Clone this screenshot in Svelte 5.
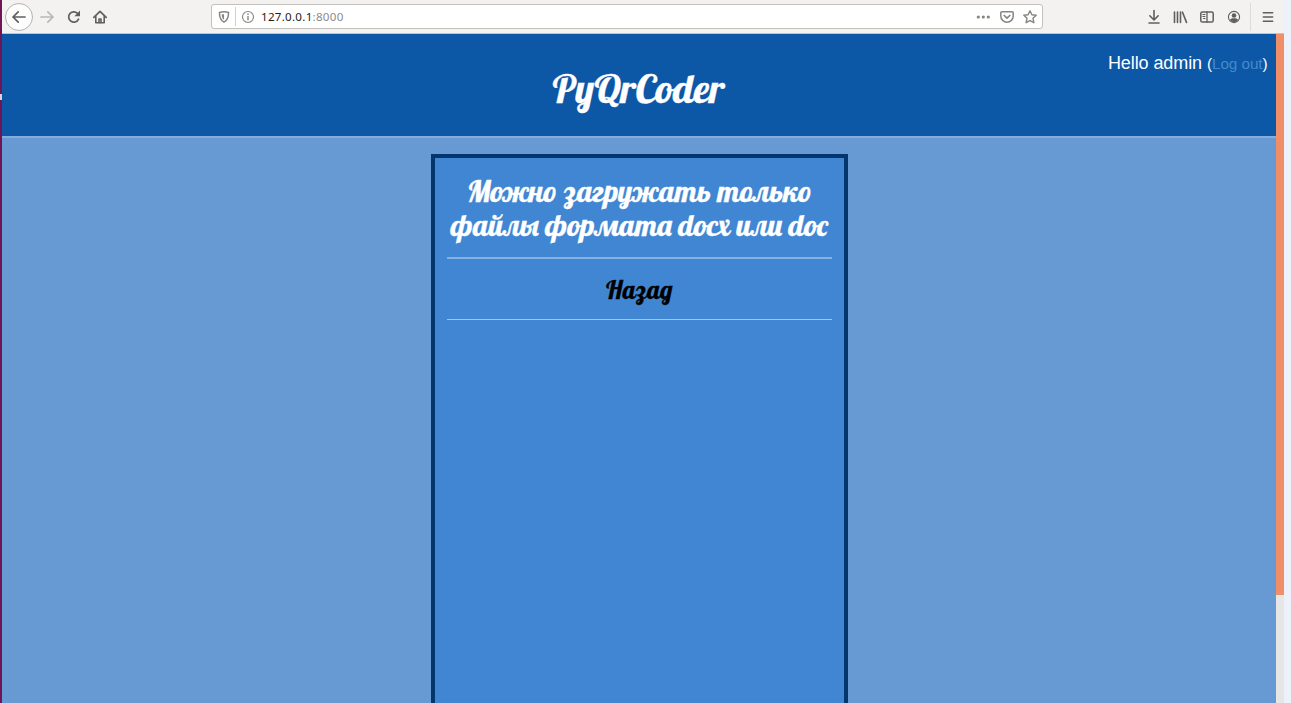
<script>
  const message = 'Можно загружать только файлы формата docx или doc';
</script>

<div class="screen">
  <div class="edge"><i></i></div>
  <div class="browser">
    <div class="toolbar">
      <span class="back">
        <svg width="16" height="16" viewBox="0 0 16 16" class="ic"><path d="M14 8H2M7.200 2.800 2 8l5.200 5.200" /></svg>
      </span>
      <svg width="16" height="16" viewBox="0 0 16 16" class="ic fwd"><path d="M2 8h12M8.800 2.800 14 8l-5.200 5.200" /></svg>
      <svg width="16" height="16" viewBox="0 0 16 16" class="ic reload"><path d="M12.6 10.2A5.2 5.2 0 1 1 12 4.8" /><path d="M14 1.6v5.6H8.4z" class="fill" /></svg>
      <svg width="16" height="16" viewBox="0 0 16 16" class="ic home"><path d="M1.8 8.3 8 2.300l6.200 6" /><path d="M3.8 7.5v6.300h8.400V7.5M7 14v-4h2v4" stroke-width="1.6" /></svg>

      <div class="url">
        <svg width="14" height="14" viewBox="0 0 16 16" class="ic lite shield"><path d="M8 2c2 0 3.700.3 5.200.8 0 5.200-.9 8.900-5.200 11.100C3.700 11.700 2.800 8 2.800 2.800 4.300 2.300 6 2 8 2z" /><path d="M8 4.800c-.9 0-1.800.1-2.600.3.1 3.200.9 5 2.600 6.100z" class="fill" /></svg>
        <span class="sep"></span>
        <svg width="14" height="14" viewBox="0 0 14 14" class="ic lite info"><circle cx="7" cy="7" r="5.500" stroke-width="1.100" /><path d="M7 6v4.200M7 3.600v1.400" stroke-width="1.400" stroke-linecap="butt" /></svg>
        <span class="addr">127.0.0.1<em>:8000</em></span>
        <svg width="16" height="16" viewBox="0 0 16 16" class="ic lite dots"><g class="fill"><circle cx="3.300" cy="8" r="1.600" /><circle cx="8.300" cy="8" r="1.600" /><circle cx="13.300" cy="8" r="1.600" /></g></svg>
        <svg width="16" height="16" viewBox="0 0 16 16" class="ic lite pocket"><path d="M2.800 2.700h10.400q1 0 1 1V7a6.200 6.200 0 0 1-12.400 0V3.700q0-1 1-1z" stroke-width="1.500" /><path d="m5.200 6.500 2.800 2.600 2.800-2.600" stroke-width="1.700" /></svg>
        <svg width="16" height="16" viewBox="0 0 16 16" class="ic lite star"><path d="m8 1.800 1.900 4 4.300.5-3.200 3 .9 4.400L8 11.600l-3.900 2.100.9-4.400-3.200-3 4.300-.5z" stroke-width="1.400" /></svg>
      </div>

      <svg width="16" height="16" viewBox="0 0 16 16" class="ic dl"><path d="M8 1.500v9M3.800 6.800 8 11l4.200-4.200M3 14h10" stroke-width="1.600" /></svg>
      <svg width="16" height="16" viewBox="0 0 16 16" class="ic lib"><path d="M2.500 3v10.500M5.500 3v10.500M8.500 3v10.500M10.500 3.200l4 10.200" stroke-width="1.600" /></svg>
      <svg width="16" height="16" viewBox="0 0 16 16" class="ic side"><rect x="1.800" y="3" width="12.400" height="10" rx="1.600" stroke-width="1.500" /><path d="M8 3v10" stroke-width="1.300" /><path d="M3.800 5.500H6M3.800 7.500H6M4.500 9.500H6" stroke-width="1" /></svg>
      <svg width="16" height="16" viewBox="0 0 16 16" class="ic user"><circle cx="8" cy="8" r="5.600" stroke-width="1.100" /><circle cx="8" cy="6.500" r="2.300" class="fill" /><path d="M3.900 11c1.200-1.800 2.600-1.700 4.100-1.700s2.900-.1 4.100 1.700A5 5 0 0 1 3.900 11z" class="fill" /></svg>
      <span class="bar"></span>
      <svg width="16" height="16" viewBox="0 0 16 16" class="ic menu"><path d="M3.300 3.700h9.400M3.300 8h9.400M3.300 12.300h9.400" stroke-width="1.500" /></svg>
    </div>

    <div class="viewport">
      <div class="page">
        <header>
          <h1>PyQrCoder</h1>
          <p class="hello">Hello admin <small>(<a href="#logout">Log out</a>)</small></p>
        </header>
        <main>
          <section>
            <h2>{message}</h2>
            <hr class="first" />
            <h3>Назад</h3>
            <hr />
          </section>
        </main>
      </div>
      <div class="scroll"><div class="thumb"></div></div>
    </div>
  </div>
  <div class="desk"></div>
</div>

<style>
  :global(body) { margin: 0; overflow: hidden; }
  .screen { display: flex; width: 1291px; height: 703px; overflow: hidden; font-family: "Liberation Sans", Arial, sans-serif; }
  .edge { width: 2px; background: #6f1458; padding-top: 94px; box-sizing: border-box; }
  .edge i { display: block; height: 6px; background: #d8d4d6; }
  .desk { width: 7px; background: #ecf1fa; }
  .browser { width: 1282px; display: flex; flex-direction: column; }
  .toolbar { height: 34px; box-sizing: border-box; background: #f3f2f0; border-bottom: 1px solid #c5c3c0; display: flex; align-items: center; flex: none; }
  .ic { fill: none; stroke: #5f5f5c; stroke-width: 1.7; stroke-linecap: round; stroke-linejoin: round; flex: none; display: block; }
  .fill { fill: #5f5f5c; stroke: none; }
  .lite { stroke: #858583; }
  .lite .fill { fill: #858583; }
  .back { width: 26px; height: 26px; border: 1px solid #b5b3b1; border-radius: 50%; background: #fdfdfd; display: flex; align-items: center; justify-content: center; margin-left: 3px; flex: none; }
  .fwd { stroke: #b9b8b6; margin-left: 6px; }
  .reload { margin-left: 11px; }
  .home { margin-left: 10px; }
  .url { margin-left: 103px; width: 832px; height: 25px; box-sizing: border-box; border: 1px solid #c3c1be; border-radius: 3px; background: #fff; display: flex; align-items: center; flex: none; }
  .shield { margin-left: 4.500px; }
  .sep { width: 1px; height: 19px; background: #d0d0d0; margin-left: 4.500px; }
  .info { margin-left: 5px; }
  .addr { margin-left: 6px; font: 11.6px "Noto Sans", sans-serif; color: #222; width: 714px; letter-spacing: .27px; }
  .addr em { font-style: normal; color: #8b8b8b; }
  .pocket { margin-left: 8px; }
  .star { margin-left: 7px; }
  .dl { margin-left: 103px; }
  .lib { margin-left: 10px; }
  .side { margin-left: 11px; }
  .user { margin-left: 11px; }
  .bar { width: 1px; height: 28px; background: #dcdbd9; margin-left: 8px; }
  .menu { margin-left: 9px; }
  .viewport { flex: 1; display: flex; min-height: 0; }
  .page { width: 1273.500px; background: #679ad3; display: flex; flex-direction: column; }
  .scroll { width: 8.500px; background: #e6e6e6; }
  .thumb { height: 561px; background: #f08e68; }
  header { height: 104px; box-sizing: border-box; background: #0d57a7; border-bottom: 2px solid #86acdc; display: grid; grid-template-columns: 1fr auto 1fr; flex: none; }
  h1 { grid-column: 2; margin: 28px 0 0; color: #fff; font: 40px/53px "Lobster", "Liberation Serif", serif; white-space: nowrap; -webkit-text-stroke: .35px; }
  .hello { grid-column: 3; margin: 18px 8px 0 0; justify-self: end; font-size: 18px; line-height: 22px; letter-spacing: -.08px; color: #fff; white-space: nowrap; }
  .hello small { font-size: 15.300px; }
  .hello a { color: #428bca; text-decoration: none; }
  main { flex: 1; display: flex; justify-content: center; padding-top: 16px; min-height: 0; }
  section { width: 417px; box-sizing: border-box; border: solid #03366e; border-width: 4px 4px 0; background: #4186d3; padding: 16px 12px 0; margin-left: 1px; }
  h2 { margin: 0; color: #fff; font: 30px/34px "Lobster", "Liberation Serif", serif; text-align: center; -webkit-text-stroke: .35px; }
  hr { border: 0; height: 1px; background: #a5c5ea; margin: 14px 0 0; }
  .first { height: 2px; background: #86b0e2; margin-top: 15px; }
  h3 { margin: 16px 0 0; height: 30px; color: #000; font: 25px/30px "Lobster", "Liberation Serif", serif; text-align: center; -webkit-text-stroke: .3px; }
</style>
